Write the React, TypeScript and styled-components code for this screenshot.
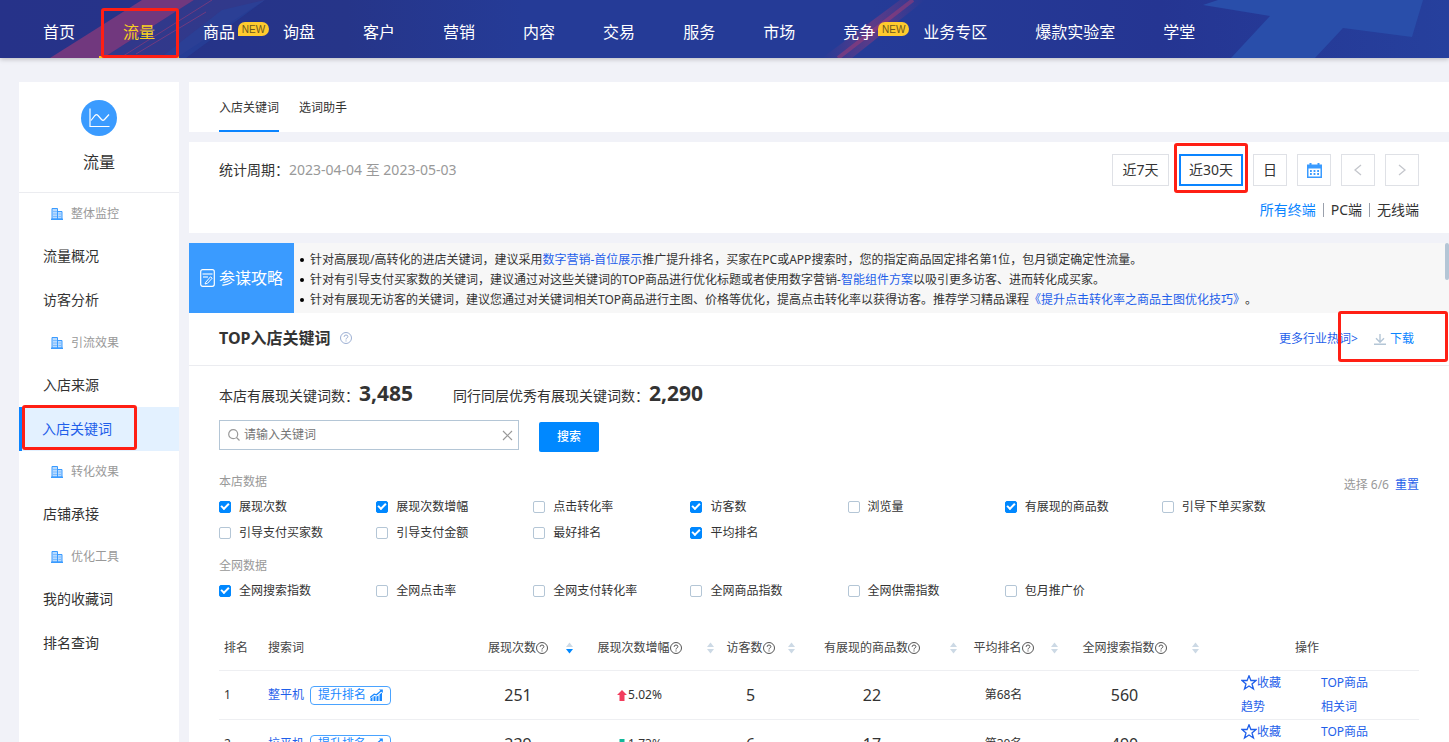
import React from 'react';
import styled, { createGlobalStyle } from 'styled-components';

const GlobalStyle = createGlobalStyle`
  *, *::before, *::after { box-sizing: border-box; }
  body {
    margin: 0;
    background: #f1f2f8;
    color: #333;
    font-family: "Noto Sans", "Noto Sans CJK SC", sans-serif;
    font-size: 12px;
    line-height: 20px;
  }
  button, input { font: inherit; color: inherit; }
  button { padding: 0; cursor: pointer; }
  a { color: #1f5fea; text-decoration: none; }
  ul { list-style: none; margin: 0; padding: 0; }
  svg { display: block; flex: none; }
`;

const Page = styled.div`
  display: flex;
  flex-direction: column;
  height: 100vh;
  overflow: hidden;
`;

/* Red marker frame laid over the element it points at */
const Marker = styled.span<{ $inset: string }>`
  position: absolute;
  inset: ${(p) => p.$inset};
  border: 3px solid #ff1f14;
  border-radius: 3px;
  pointer-events: none;
  z-index: 2;
`;

/* ---------- top navigation ---------- */

const TopBar = styled.header`
  position: relative;
  flex: none;
  height: 58px;
  padding-left: 19px;
  background: linear-gradient(90deg, #263289 0%, #263589 24%, #253b97 36%, #253b97 60%, #253592 80%, #26409d 100%);
  box-shadow: 0 1px 5px rgba(0, 0, 0, 0.25);
`;

const TopArt = styled.svg`
  position: absolute;
  inset: 0;
  width: 100%;
  height: 100%;
`;

const TopNav = styled.nav`
  position: relative;
  display: flex;
`;

const TopLink = styled.a<{ $active?: boolean }>`
  position: relative;
  height: 58px;
  padding: 0 24px;
  font-size: 16px;
  line-height: 64px;
  white-space: nowrap;
  color: ${(p) => (p.$active ? '#f7d01e' : '#fff')};
  border-bottom: ${(p) => (p.$active ? '2px solid #ffc61c' : '0')};
`;

const NewTag = styled.span`
  position: absolute;
  left: 59px;
  top: 22px;
  width: 31px;
  height: 14px;
  border-radius: 7px 7px 7px 0;
  background: #ffcb2e;
  color: #6b5720;
  font: 10px/16px "Liberation Sans", sans-serif;
  text-align: center;
`;

/* ---------- shell ---------- */

const Shell = styled.div`
  display: flex;
  flex: 1;
  gap: 10px;
  min-height: 0;
  padding: 24px 0 0 19px;
`;

const Sidebar = styled.aside`
  flex: none;
  width: 160px;
  background: #fff;
`;

const SideHead = styled.div`
  display: flex;
  flex-direction: column;
  align-items: center;
  gap: 14px;
  height: 111px;
  padding-top: 18px;
  border-bottom: 1px solid #ebecf0;
  font-size: 16px;
  line-height: 24px;
`;

const SideGroup = styled.div`
  display: flex;
  align-items: center;
  gap: 8px;
  height: 41px;
  padding-left: 32px;
  color: #999;
`;

const SideLink = styled.a<{ $active?: boolean }>`
  position: relative;
  display: block;
  height: 44px;
  padding-left: ${(p) => (p.$active ? '20px' : '24px')};
  border-left: ${(p) => (p.$active ? '3px solid #0a84ff' : '0')};
  background: ${(p) => (p.$active ? '#e3f1ff' : 'transparent')};
  color: ${(p) => (p.$active ? '#1f5fea' : '#333')};
  font-size: 14px;
  line-height: 44px;
`;

const Main = styled.main`
  display: flex;
  flex: 1;
  flex-direction: column;
  gap: 10px;
  min-width: 0;
`;

const Tabs = styled.nav`
  display: flex;
  flex: none;
  gap: 20px;
  height: 50px;
  padding: 0 30px;
  background: #fff;
`;

const Tab = styled.a<{ $active?: boolean }>`
  height: 50px;
  line-height: 52px;
  color: #333;
  border-bottom: ${(p) => (p.$active ? '2px solid #0a84ff' : '0')};
`;

/* ---------- period panel ---------- */

const Period = styled.section`
  display: flex;
  flex: none;
  justify-content: space-between;
  height: 91px;
  padding: 12px 30px 0;
  background: #fff;
  font-size: 14px;
`;

const PeriodText = styled.div`
  line-height: 32px;
  span { color: #999; }
`;

const PeriodSide = styled.div`
  display: flex;
  flex-direction: column;
  align-items: flex-end;
  gap: 14px;
`;

const ButtonRow = styled.div`
  display: flex;
  gap: 10px;
`;

const RangeButton = styled.button<{ $width: number; $active?: boolean }>`
  position: relative;
  display: flex;
  align-items: center;
  justify-content: center;
  width: ${(p) => p.$width}px;
  height: 32px;
  border: ${(p) => (p.$active ? '2px solid #0a84ff' : '1px solid #dfe1e6')};
  background: #fff;
  white-space: nowrap;
`;

const Terminals = styled.div`
  display: flex;
  align-items: center;
`;

const TerminalLink = styled.a<{ $active?: boolean }>`
  display: flex;
  align-items: center;
  color: ${(p) => (p.$active ? '#0a84ff' : '#333')};
  &:not(:first-child)::before {
    content: '';
    width: 1px;
    height: 14px;
    margin: 0 7px;
    background: #9aa0ac;
  }
`;

/* ---------- content panel ---------- */

const Panel = styled.section`
  position: relative;
  flex: 1;
  min-height: 0;
  overflow: hidden;
  background: #fff;
`;

const ScrollThumb = styled.div`
  position: absolute;
  top: 0;
  right: 0;
  width: 4px;
  height: 37px;
  border-radius: 2px;
  background: #b4c6d6;
`;

const Strategy = styled.div`
  display: flex;
  height: 70px;
  background: #f7f7f7;
`;

const StrategyTitle = styled.div`
  display: flex;
  flex: none;
  align-items: center;
  gap: 4px;
  width: 105px;
  padding-left: 11px;
  background: #3a9bff;
  color: #fff;
  font-size: 16px;
`;

const Tips = styled.ul`
  padding: 7px 0 0 6px;
  white-space: nowrap;
`;

const Tip = styled.li`
  display: flex;
  align-items: center;
  &::before {
    content: '';
    width: 4px;
    height: 4px;
    margin-right: 6px;
    border-radius: 50%;
    background: #000;
  }
`;

const PanelHead = styled.div`
  display: flex;
  align-items: center;
  height: 53px;
  padding: 0 30px 2px;
  border-bottom: 1px solid #ebecf0;
`;

const PanelTitle = styled.h2`
  margin: 0 9px 0 0;
  font-size: 16px;
  line-height: 24px;
  font-weight: 700;
`;

const HeadLinks = styled.div`
  position: relative;
  display: flex;
  align-items: center;
  gap: 16px;
  margin-left: auto;
  padding: 2px 5px 0 0;
`;

const DownloadButton = styled.button`
  display: flex;
  align-items: center;
  gap: 4px;
  border: 0;
  background: none;
  color: #0a84ff;
`;

const PanelBody = styled.div`
  padding: 12px 30px 0;
`;

const Stats = styled.dl`
  display: flex;
  gap: 40px;
  margin: 0;
  font-size: 14px;
  line-height: 30px;
`;

const Stat = styled.div`
  display: flex;
  align-items: baseline;
  dd {
    margin: 0;
    font-size: 21px;
    font-weight: 700;
  }
`;

const SearchForm = styled.form`
  display: flex;
  align-items: flex-end;
  gap: 20px;
  margin-top: 9px;
  height: 32px;
`;

const SearchBox = styled.label`
  display: flex;
  align-items: center;
  align-self: flex-start;
  width: 300px;
  height: 30px;
  padding: 0 5px 0 8px;
  border: 1px solid #b4c6d6;
`;

const SearchInput = styled.input`
  flex: 1;
  min-width: 0;
  margin-left: 4px;
  padding: 0;
  border: 0;
  outline: 0;
  background: none;
  line-height: 20px;
  &::placeholder { color: #757575; opacity: 1; }
`;

const ClearButton = styled.button`
  border: 0;
  background: none;
`;

const SearchButton = styled.button`
  width: 60px;
  height: 30px;
  border: 0;
  border-radius: 2px;
  background: #0088ff;
  color: #fff;
  font-weight: 500;
`;

const Metrics = styled.div`
  display: flex;
  gap: 20px;
  margin-top: 20px;
`;

const MetricGroups = styled.div`
  flex: 1;
`;

const MetricGroup = styled.fieldset`
  margin: 0;
  padding: 0;
  border: 0;
  & + & { margin-top: 10px; }
`;

const MetricLegend = styled.legend`
  padding: 0;
  margin-bottom: 2px;
  color: #999;
`;

const MetricGrid = styled.div`
  display: grid;
  grid-template-columns: repeat(7, 1fr);
`;

const Check = styled.label`
  display: flex;
  align-items: center;
  gap: 8px;
  height: 26px;
  white-space: nowrap;
`;

const CheckInput = styled.input`
  appearance: none;
  position: relative;
  width: 12px;
  height: 12px;
  margin: 0;
  border: 1px solid #b4c6d6;
  border-radius: 2px;
  background: #fff;
  &:checked {
    border-color: #0088ff;
    background: #0088ff;
  }
  &:checked::after {
    content: '';
    position: absolute;
    left: 1px;
    top: 1px;
    width: 8px;
    height: 5px;
    border: solid #fff;
    border-width: 0 0 2px 2px;
    transform: rotate(-45deg);
  }
`;

const Picked = styled.div`
  flex: none;
  width: 80px;
  padding-top: 3px;
  text-align: right;
  color: #999;
  button {
    border: 0;
    margin-left: 6px;
    background: none;
    color: #1f5fea;
  }
`;

/* ---------- table ---------- */

const Table = styled.table`
  width: 100%;
  margin-top: 22px;
  table-layout: fixed;
  border-collapse: separate;
  border-spacing: 0;
`;

const Th = styled.th<{ $left?: boolean }>`
  position: relative;
  height: 45px;
  padding: 0 0 0 ${(p) => (p.$left ? 5 : 0)}px;
  border-bottom: 1px solid #eeeff2;
  color: #444;
  font-weight: 400;
  text-align: ${(p) => (p.$left ? 'left' : 'center')};
`;

const ThLabel = styled.span`
  display: flex;
  align-items: center;
  justify-content: center;
`;

const SortButton = styled.button`
  position: absolute;
  right: -4px;
  top: 50%;
  margin-top: -6px;
  border: 0;
  background: none;
`;

const Td = styled.td<{ $left?: boolean; $big?: boolean }>`
  height: 49px;
  padding: 0 0 0 ${(p) => (p.$left ? 5 : 0)}px;
  border-bottom: 1px solid #eeeff2;
  font-size: ${(p) => (p.$big ? 16 : 12)}px;
  text-align: ${(p) => (p.$left ? 'left' : 'center')};
`;

const Inline = styled.span<{ $gap: number; $center?: boolean }>`
  display: flex;
  align-items: center;
  justify-content: ${(p) => (p.$center ? 'center' : 'flex-start')};
  gap: ${(p) => p.$gap}px;
`;

const BoostButton = styled.button`
  display: flex;
  align-items: center;
  justify-content: center;
  gap: 4px;
  width: 81px;
  height: 19px;
  border: 1px solid #4aa3ff;
  border-radius: 4px;
  background: #fff;
  color: #1988ff;
  line-height: 16px;
  white-space: nowrap;
`;

const Actions = styled.div`
  display: grid;
  grid-template-columns: 80px 80px;
  padding-left: 46px;
  text-align: left;
  line-height: 24px;
  a { display: flex; align-items: center; }
`;

/* ---------- drawings ---------- */

const ChartBadge = () => (
  <svg width="36" height="36" viewBox="0 0 36 36" fill="none" stroke="#fff">
    <circle cx="18" cy="18" r="18" fill="#3a9bff" stroke="none" />
    <path d="M9 8.500V26.500H28.500" strokeWidth="1.200" />
    <path d="M10 20.500L14 15.500Q15.500 14 17 15.500L20.500 19.500Q22 21 23.500 19.500L28 14.500" strokeWidth="1.200" />
  </svg>
);

const BuildingIcon = () => (
  <svg width="12" height="12" viewBox="0 0 12 12">
    <path d="M1 .5H6.500V11H1zM6.500 3.500H11V11H6.500z" fill="#b9dbff" stroke="#3a9bff" />
    <path d="M2 3.500H6M2 6H6M2 8.500H6M7.500 6H10.500M7.500 8.500H10.500" stroke="#7dbcff" />
    <path d="M0 11.300H12" stroke="#3a9bff" strokeWidth="1.400" />
  </svg>
);

const NoteIcon = () => (
  <svg width="15" height="18" viewBox="0 0 15 18" fill="none" stroke="#fff" strokeWidth="1">
    <rect x=".7" y=".7" width="13.600" height="16.600" rx="2" strokeWidth="1.200" />
    <path d="M2.500 5H12.500M3 8H8" opacity=".75" strokeWidth="1.300" />
    <path d="M5.800 13.200L10.500 7.800L12.200 9.200L7.500 14.300L5 15z" />
  </svg>
);

const HelpIcon = ({ color = '#555' }: { color?: string }) => (
  <svg width="12" height="12" viewBox="0 0 12 12" fill="none" stroke={color}>
    <circle cx="6" cy="6" r="5.500" />
    <path d="M4.100 4.900Q4.100 3 6 3T7.900 4.700Q7.900 5.500 6.900 6T6 7.500M6 8.400V9.500" />
  </svg>
);

const CalendarIcon = () => (
  <svg width="15" height="15" viewBox="0 0 15 15">
    <path d="M0 1.500H15V15H0z" fill="#3a9bff" />
    <path d="M2.500 0H4.500V3H2.500zM10.500 0H12.500V3H10.500z" fill="#3a9bff" />
    <path d="M1.500 5.500H13.500V13.500H1.500z" fill="#fff" />
    <path d="M3 8H12M3 11H12" stroke="#3a9bff" strokeWidth="1.800" strokeDasharray="1.800 1.800" />
  </svg>
);

const Chevron = ({ d }: { d: string }) => (
  <svg width="8" height="12" viewBox="0 0 8 12" fill="none" stroke="#c4c6cc" strokeWidth="1.300">
    <path d={d} />
  </svg>
);

const DownloadIcon = () => (
  <svg width="12" height="12" viewBox="0 0 12 12" fill="none" stroke="#b4c6d6" strokeWidth="1.400">
    <path d="M6 1V9M2 5.300L6 9.200L10 5.300M0 11.300H12" />
  </svg>
);

const SearchIcon = () => (
  <svg width="12" height="12" viewBox="0 0 12 12" fill="none" stroke="#999" strokeWidth="1.200">
    <circle cx="5.200" cy="5.200" r="4.500" />
    <path d="M8.500 8.500L11.500 11.500" />
  </svg>
);

const CloseIcon = () => (
  <svg width="11" height="11" viewBox="0 0 11 11" stroke="#999" strokeWidth="1.200">
    <path d="M1 1L10 10M10 1L1 10" />
  </svg>
);

const SortIcon = ({ down }: { down?: boolean }) => (
  <svg width="7" height="12" viewBox="0 0 7 12">
    <path d="M3.500 .5L7 5H0z" fill="#ccd9e5" />
    <path d="M3.500 11.500L7 7H0z" fill={down ? '#0088ff' : '#ccd9e5'} />
  </svg>
);

const TrendIcon = () => (
  <svg width="13" height="12" viewBox="0 0 13 12" fill="#1988ff">
    <path d="M.5 9.500L2.500 8V12H.5zM3.500 7.500L5.500 7V12H3.500zM6.500 7.500L8.500 6.500V12H6.500zM9.500 5.500L12 3.500V12H9.500z" />
    <path d="M0 8.500L4.200 5.200L6.500 5.800L11.500 1.500" fill="none" stroke="#1988ff" strokeWidth="1.300" />
    <path d="M9 .5H12.800V4z" />
  </svg>
);

const ArrowIcon = ({ up }: { up: boolean }) => (
  <svg width="10" height="11" viewBox="0 0 10 11">
    {up ? (
      <path d="M5 0L10 5H7.500V11H2.500V5H0z" fill="#f23c5c" />
    ) : (
      <path d="M5 11L10 6H7.500V0H2.500V6H0z" fill="#12b89a" />
    )}
  </svg>
);

const StarIcon = () => (
  <svg width="16" height="16" viewBox="0 0 16 16" fill="none" stroke="#1f5fea" strokeWidth="1.300">
    <path d="M8 .8L9.900 5.500H15L11 8.900L12.500 14L8 11L3.500 14L5 8.900L1 5.500H6.100z" />
  </svg>
);

/* ---------- data ---------- */

const topItems = [
  { text: '首页' },
  { text: '流量', active: true },
  { text: '商品', fresh: true },
  { text: '询盘' },
  { text: '客户' },
  { text: '营销' },
  { text: '内容' },
  { text: '交易' },
  { text: '服务' },
  { text: '市场' },
  { text: '竞争', fresh: true },
  { text: '业务专区' },
  { text: '爆款实验室' },
  { text: '学堂' },
];

const sideGroups = [
  { title: '整体监控', items: ['流量概况', '访客分析'] },
  { title: '引流效果', items: ['入店来源', '入店关键词'] },
  { title: '转化效果', items: ['店铺承接'] },
  { title: '优化工具', items: ['我的收藏词', '排名查询'] },
];

const metricGroups: { title: string; items: [string, boolean][] }[] = [
  {
    title: '本店数据',
    items: [
      ['展现次数', true],
      ['展现次数增幅', true],
      ['点击转化率', false],
      ['访客数', true],
      ['浏览量', false],
      ['有展现的商品数', true],
      ['引导下单买家数', false],
      ['引导支付买家数', false],
      ['引导支付金额', false],
      ['最好排名', false],
      ['平均排名', true],
    ],
  },
  {
    title: '全网数据',
    items: [
      ['全网搜索指数', true],
      ['全网点击率', false],
      ['全网支付转化率', false],
      ['全网商品指数', false],
      ['全网供需指数', false],
      ['包月推广价', false],
    ],
  },
];

const columnWidths = [44, 204, 102, 141, 81, 162, 101, 141, 224];
const sortable = ['展现次数', '展现次数增幅', '访客数', '有展现的商品数', '平均排名', '全网搜索指数'];

const rows = [
  { rank: 1, word: '整平机', shows: 251, up: true, growth: '5.02%', visitors: 5, goods: 22, avg: '第68名', index: 560 },
  { rank: 2, word: '拉平机', shows: 239, up: false, growth: '1.73%', visitors: 6, goods: 17, avg: '第30名', index: 490 },
];

export default function App() {
  return (
    <Page>
      <GlobalStyle />
      <TopBar>
        <TopArt viewBox="0 0 1449 58" preserveAspectRatio="none" aria-hidden="true">
          <defs>
            <linearGradient id="beam" x1="0" x2="1" y1="0" y2="0">
              <stop offset="0" stopColor="#b03a70" stopOpacity="0" />
              <stop offset=".5" stopColor="#b03a70" stopOpacity=".4" />
              <stop offset="1" stopColor="#b03a70" stopOpacity="0" />
            </linearGradient>
          </defs>
          <path d="M50 58L142 0H194L103 58z" fill="#a03c78" fillOpacity=".62" />
          <path d="M103 58L194 0H265L176 58z" fill="#44408e" fillOpacity=".4" />
          <path d="M120 58L212 0M136 54L206 12" stroke="#b03c74" strokeOpacity=".5" />
          <path d="M160 58L222 10L265 0L186 58z" fill="#2545a0" fillOpacity=".5" />
          <path d="M822 58L900 0H925L852 58z" fill="url(#beam)" />
          <path d="M838 58L913 0" stroke="#a83c74" strokeOpacity=".5" strokeWidth="4" />
          <path d="M1218 0L1203 5L1270 16L1231 58H1315L1343 28L1412 37L1423 0z" fill="#294eaa" />
        </TopArt>
        <TopNav>
          {topItems.map((item) => (
            <TopLink key={item.text} href="#" $active={item.active}>
              {item.text}
              {item.fresh && <NewTag>NEW</NewTag>}
              {item.active && <Marker $inset="8px 0 -2px 2px" />}
            </TopLink>
          ))}
        </TopNav>
      </TopBar>

      <Shell>
        <Sidebar>
          <SideHead>
            <ChartBadge />
            流量
          </SideHead>
          {sideGroups.map((group) => (
            <nav key={group.title} aria-label={group.title}>
              <SideGroup>
                <BuildingIcon />
                {group.title}
              </SideGroup>
              {group.items.map((text) => {
                const active = text === '入店关键词';
                return (
                  <SideLink key={text} href="#" $active={active}>
                    {text}
                    {active && <Marker $inset="-2px 42px 1px 0" />}
                  </SideLink>
                );
              })}
            </nav>
          ))}
        </Sidebar>

        <Main>
          <Tabs>
            <Tab href="#" $active>入店关键词</Tab>
            <Tab href="#">选词助手</Tab>
          </Tabs>

          <Period>
            <PeriodText>
              统计周期：<span>2023-04-04 至 2023-05-03</span>
            </PeriodText>
            <PeriodSide>
              <ButtonRow>
                <RangeButton type="button" $width={57}>近7天</RangeButton>
                <RangeButton type="button" $width={64} $active>
                  近30天
                  <Marker $inset="-13px -7px -9px -7px" />
                </RangeButton>
                <RangeButton type="button" $width={34}>日</RangeButton>
                <RangeButton type="button" $width={34} aria-label="选择日期"><CalendarIcon /></RangeButton>
                <RangeButton type="button" $width={34} aria-label="上一个"><Chevron d="M7 1L1 6L7 11" /></RangeButton>
                <RangeButton type="button" $width={34} aria-label="下一个"><Chevron d="M1 1L7 6L1 11" /></RangeButton>
              </ButtonRow>
              <Terminals>
                <TerminalLink href="#" $active>所有终端</TerminalLink>
                <TerminalLink href="#">PC端</TerminalLink>
                <TerminalLink href="#">无线端</TerminalLink>
              </Terminals>
            </PeriodSide>
          </Period>

          <Panel>
            <Strategy>
              <StrategyTitle>
                <NoteIcon />
                参谋攻略
              </StrategyTitle>
              <Tips>
                <Tip>
                  针对高展现/高转化的进店关键词，建议采用<a href="#">数字营销-首位展示</a>推广提升排名，买家在PC或APP搜索时，您的指定商品固定排名第1位，包月锁定确定性流量。
                </Tip>
                <Tip>
                  针对有引导支付买家数的关键词，建议通过对这些关键词的TOP商品进行优化标题或者使用数字营销-<a href="#">智能组件方案</a>以吸引更多访客、进而转化成买家。
                </Tip>
                <Tip>
                  针对有展现无访客的关键词，建议您通过对关键词相关TOP商品进行主图、价格等优化，提高点击转化率以获得访客。推荐学习精品课程<a href="#">《提升点击转化率之商品主图优化技巧》</a>。
                </Tip>
              </Tips>
            </Strategy>

            <PanelHead>
              <PanelTitle>TOP入店关键词</PanelTitle>
              <HelpIcon color="#9db0d3" />
              <HeadLinks>
                <a href="#">更多行业热词&gt;</a>
                <DownloadButton type="button">
                  <DownloadIcon />
                  下载
                </DownloadButton>
                <Marker $inset="-16px -29px -13px 59px" />
              </HeadLinks>
            </PanelHead>

            <PanelBody>
              <Stats>
                <Stat><dt>本店有展现关键词数：</dt><dd>3,485</dd></Stat>
                <Stat><dt>同行同层优秀有展现关键词数：</dt><dd>2,290</dd></Stat>
              </Stats>

              <SearchForm>
                <SearchBox>
                  <SearchIcon />
                  <SearchInput placeholder="请输入关键词" />
                  <ClearButton type="button" aria-label="清除"><CloseIcon /></ClearButton>
                </SearchBox>
                <SearchButton type="button">搜索</SearchButton>
              </SearchForm>

              <Metrics>
                <MetricGroups>
                  {metricGroups.map((group) => (
                    <MetricGroup key={group.title}>
                      <MetricLegend>{group.title}</MetricLegend>
                      <MetricGrid>
                        {group.items.map(([text, checked]) => (
                          <Check key={text}>
                            <CheckInput type="checkbox" defaultChecked={checked} />
                            {text}
                          </Check>
                        ))}
                      </MetricGrid>
                    </MetricGroup>
                  ))}
                </MetricGroups>
                <Picked>选择 6/6<button type="button">重置</button></Picked>
              </Metrics>

              <Table>
                <colgroup>
                  {columnWidths.map((width, i) => (
                    <col key={i} width={width} />
                  ))}
                </colgroup>
                <thead>
                  <tr>
                    <Th $left>排名</Th>
                    <Th $left>搜索词</Th>
                    {sortable.map((text, i) => (
                      <Th key={text}>
                        <ThLabel>{text}<HelpIcon /></ThLabel>
                        <SortButton type="button" aria-label={`按${text}排序`}><SortIcon down={i === 0} /></SortButton>
                      </Th>
                    ))}
                    <Th>操作</Th>
                  </tr>
                </thead>
                <tbody>
                  {rows.map((row) => (
                    <tr key={row.rank}>
                      <Td $left>{row.rank}</Td>
                      <Td $left>
                        <Inline $gap={6}>
                          <a href="#">{row.word}</a>
                          <BoostButton type="button">提升排名<TrendIcon /></BoostButton>
                        </Inline>
                      </Td>
                      <Td $big>{row.shows}</Td>
                      <Td><Inline $gap={1} $center><ArrowIcon up={row.up} />{row.growth}</Inline></Td>
                      <Td $big>{row.visitors}</Td>
                      <Td $big>{row.goods}</Td>
                      <Td>{row.avg}</Td>
                      <Td $big>{row.index}</Td>
                      <Td>
                        <Actions>
                          <a href="#"><StarIcon />收藏</a>
                          <a href="#">TOP商品</a>
                          <a href="#">趋势</a>
                          <a href="#">相关词</a>
                        </Actions>
                      </Td>
                    </tr>
                  ))}
                </tbody>
              </Table>
            </PanelBody>
            <ScrollThumb />
          </Panel>
        </Main>
      </Shell>
    </Page>
  );
}
